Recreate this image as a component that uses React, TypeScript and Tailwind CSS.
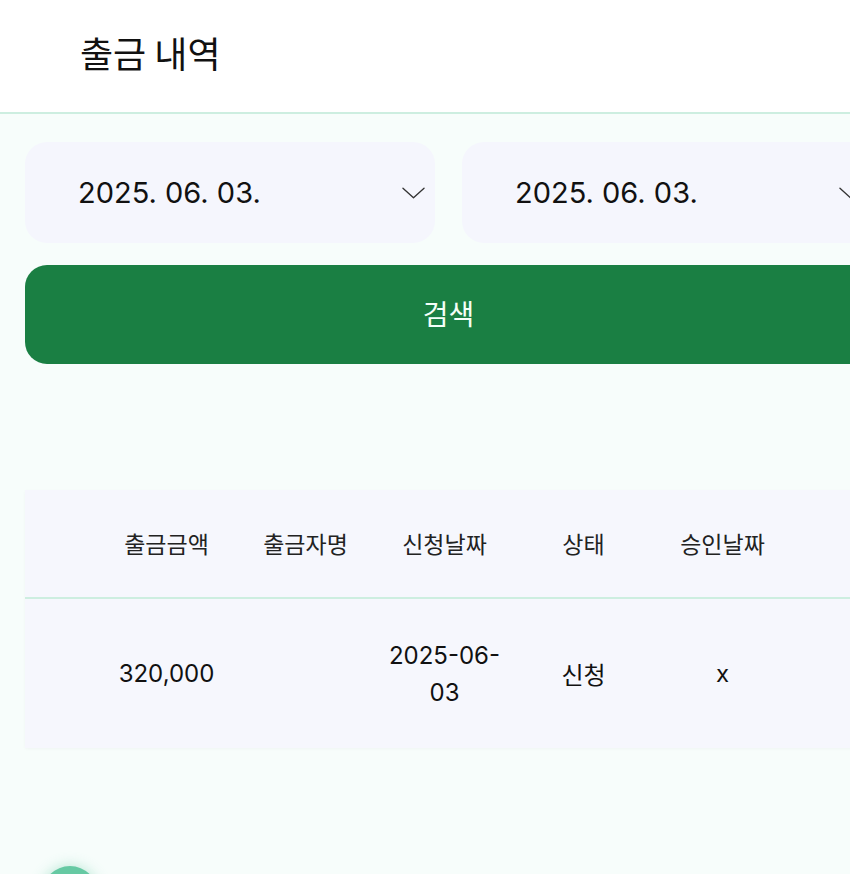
const font = { fontFamily: '"Inter", "Noto Sans CJK KR", sans-serif' };
const kr = { fontFamily: '"Noto Sans CJK KR", sans-serif' };

const Chevron: Function = () => (
  <svg viewBox="0 0 24 12" className="w-[23px] h-[12px] shrink-0" fill="none" stroke="#333" strokeWidth={1.4}>
    <path d="M1 1l11 10L23 1" strokeLinecap="round" strokeLinejoin="round" />
  </svg>
);

const DateBox: Function = () => (
  <div className="flex-1 h-[101px] rounded-[22px] bg-[#f5f6fd] flex items-center pl-[53px] pr-[10px]">
    <span className="flex-1 text-[29px] text-[#111]">2025. 06. 03.</span>
    <Chevron />
  </div>
);

const headers = ["출금금액", "출금자명", "신청날짜", "상태", "승인날짜"];

export default function App() {
  return (
    <div className="w-[850px] h-[874px] overflow-hidden bg-[#f7fdfb]" style={font}>
      <div className="w-[897px]">
        <div className="h-[114px] bg-white border-b-2 border-[#cdeee0] flex items-center pl-[80px]">
          <h1 className="text-[36px] font-normal text-[#111] pb-[8px]" style={kr}>
            출금 내역
          </h1>
        </div>

        <div className="px-[25px] pt-[28px]">
          <div className="flex gap-[27px]">
            <DateBox />
            <DateBox />
          </div>
          <button className="mt-[22px] w-full h-[99px] rounded-[22px] bg-[#1a7f43] text-[#f4fff8] text-[28px]">
            검색
          </button>

          <div className="mt-[126px] bg-[#f6f7fd] shadow-[0_1px_3px_rgba(0,0,0,0.03)]">
            <div className="h-[109px] flex items-center pl-[72px] border-b-2 border-[#cdeee0]">
              {headers.map((h) => (
                <div key={h} className="w-[139px] shrink-0 text-center text-[23px] text-[#222]" style={kr}>
                  {h}
                </div>
              ))}
            </div>
            <div className="h-[149px] flex items-center pl-[72px] text-[24px] text-[#111] leading-[37px]">
              <div className="w-[139px] shrink-0 text-center">320,000</div>
              <div className="w-[139px] shrink-0 text-center"></div>
              <div className="w-[139px] shrink-0 text-center px-[12px]">2025-06-03</div>
              <div className="w-[139px] shrink-0 text-center" style={kr}>신청</div>
              <div className="w-[139px] shrink-0 text-center">x</div>
            </div>
          </div>

          <div className="mt-[118px] ml-[17px] w-[56px] h-[56px] rounded-full bg-[#66c9a3] shadow-[0_0_14px_rgba(102,201,163,0.45)]"></div>
        </div>
      </div>
    </div>
  );
}
